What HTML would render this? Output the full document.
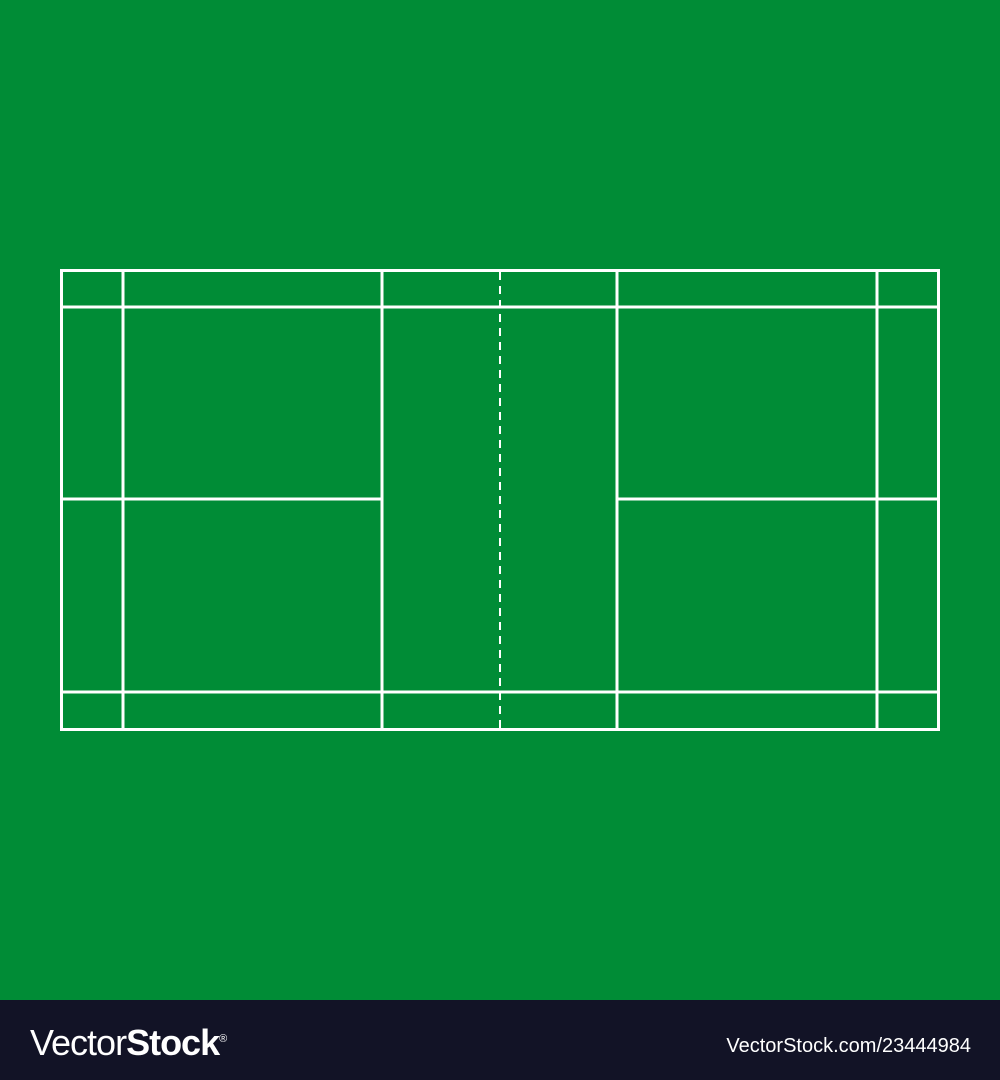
<!DOCTYPE html>
<html><head><style>
body{margin:0;width:1000px;height:1080px;background:#008c36;position:relative;overflow:hidden}
.f{position:absolute;left:0;top:1000px;width:1000px;height:80px;background:#121326;color:#fff;font-family:"Liberation Sans",sans-serif}
</style></head><body>
<svg width="1000" height="1000" style="position:absolute;left:0;top:0">
<g stroke="#fff" stroke-width="3" fill="none">
<rect x="61.5" y="270.5" width="877" height="459"/>
<line x1="61" y1="307" x2="939" y2="307"/>
<line x1="61" y1="692" x2="939" y2="692"/>
<line x1="123" y1="270" x2="123" y2="730"/>
<line x1="382" y1="270" x2="382" y2="730"/>
<line x1="617" y1="270" x2="617" y2="730"/>
<line x1="877" y1="270" x2="877" y2="730"/>
<line x1="61" y1="499" x2="382" y2="499"/>
<line x1="617" y1="499" x2="939" y2="499"/>
<line x1="500" y1="272" x2="500" y2="728" stroke-width="2" stroke-dasharray="8,6"/>
</g></svg>
<div class="f">
<div style="position:absolute;left:30px;top:22px;font-size:36px;letter-spacing:-1px"><span style="font-weight:300">Vector</span><b>Stock</b><sup style="font-size:11px">®</sup></div>
<div style="position:absolute;right:29px;top:35px;font-size:20px;letter-spacing:0px">VectorStock.com/23444984</div>
</div>
</body></html>
